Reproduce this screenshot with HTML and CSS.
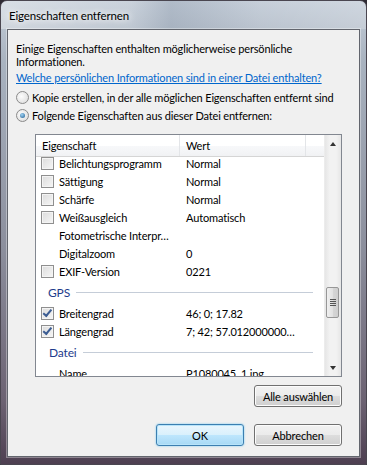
FILE: index.html
```html
<!DOCTYPE html>
<html lang="de">
<head>
    <meta charset="UTF-8">
    <meta name="viewport" content="width=device-width, initial-scale=1.0">
    <title>Eigenschaften entfernen</title>
    <link rel="stylesheet" href="styles.css">
</head>
<body>
    <div class="window">
        <div class="titlebar">Eigenschaften entfernen</div>
        <div class="client">
            <p class="intro">Einige Eigenschaften enthalten möglicherweise persönliche<br>Informationen.</p>
            <a href="#" class="link">Welche persönlichen Informationen sind in einer Datei enthalten?</a>
            <label class="radio first"><span class="dot"></span>Kopie erstellen, in der alle möglichen Eigenschaften entfernt sind</label>
            <label class="radio"><span class="dot on"></span>Folgende Eigenschaften aus dieser Datei entfernen:</label>

            <div class="listbox">
                <div class="listmain">
                    <div class="header">
                        <div class="hcol name">Eigenschaft</div>
                        <div class="hcol value">Wert</div>
                        <div class="hcol rest"></div>
                    </div>
                    <div class="rows">
                        <div class="inner">
                            <div class="row"><span class="box"></span><span class="name">Belichtungsprogramm</span><span class="value">Normal</span></div>
                            <div class="row"><span class="box"></span><span class="name">Sättigung</span><span class="value">Normal</span></div>
                            <div class="row"><span class="box"></span><span class="name">Schärfe</span><span class="value">Normal</span></div>
                            <div class="row"><span class="box"></span><span class="name">Weißausgleich</span><span class="value">Automatisch</span></div>
                            <div class="row"><span class="nobox"></span><span class="name">Fotometrische Interpr…</span><span class="value"></span></div>
                            <div class="row"><span class="nobox"></span><span class="name">Digitalzoom</span><span class="value">0</span></div>
                            <div class="row"><span class="box"></span><span class="name">EXIF-Version</span><span class="value">0221</span></div>
                            <div class="group gps"><span>GPS</span><i></i></div>
                            <div class="row"><span class="box checked"></span><span class="name">Breitengrad</span><span class="value">46; 0; 17.82</span></div>
                            <div class="row"><span class="box checked"></span><span class="name">Längengrad</span><span class="value">7; 42; 57.012000000…</span></div>
                            <div class="group"><span>Datei</span><i></i></div>
                            <div class="row"><span class="nobox"></span><span class="name">Name</span><span class="value">P1080045_1.jpg</span></div>
                        </div>
                    </div>
                </div>
                <div class="scrollbar">
                    <div class="arrow up"></div>
                    <div class="track">
                        <div class="thumb"><span></span><span></span><span></span><span></span></div>
                    </div>
                    <div class="arrow down"></div>
                </div>
            </div>

            <div class="buttons top">
                <button class="btn">Alle auswählen</button>
            </div>
            <div class="buttons bottom">
                <button class="btn default">OK</button>
                <button class="btn">Abbrechen</button>
            </div>
        </div>
    </div>
</body>
</html>
```

FILE: styles.css
```css
html, body {
    margin: 0;
    background: #2e2a33;
}
body {
    font-family: "Lato", "Open Sans", sans-serif;
    font-size: 11px;
    letter-spacing: -0.15px;
    color: #000;
}
.window {
    width: 367px;
    height: 465px;
    box-sizing: border-box;
    display: flex;
    flex-direction: column;
    border-radius: 7px 7px 0 0;
    border: 1px solid #4a4650;
    background: linear-gradient(to bottom, #c4cdd8 0, #a9b3c0 60px, #8b8e9c 250px, #6c6272 400px, #4d3e50 465px);
}
.titlebar {
    height: 28px;
    line-height: 30px;
    padding-left: 8px;
    font-size: 11.5px;
    background: linear-gradient(to right, rgba(255,255,255,0.35) 0, rgba(255,255,255,0.1) 130px, rgba(120,135,155,0.25) 170px, rgba(255,255,255,0.05) 260px, rgba(255,255,255,0.2) 100%);
    border-radius: 6px 6px 0 0;
    text-shadow: 0 0 6px #fff, 0 0 10px #fff;
    flex-shrink: 0;
}
.client {
    margin: 0 6px 7px 6px;
    flex: 1;
    background: #f0f0f0;
    border: 1px solid #62656d;
    box-shadow: 0 0 0 1px rgba(255,255,255,0.35);
    display: flex;
    flex-direction: column;
    align-items: flex-start;
    padding: 0 17px 0 8px;
}
.intro {
    margin: 12px 0 0;
    line-height: 13px;
    white-space: nowrap;
}
.link {
    margin-top: 3px;
    color: #0066cc;
    line-height: 14px;
    white-space: nowrap;
}
.radio {
    display: flex;
    align-items: center;
    gap: 3px;
    height: 18px;
    white-space: nowrap;
}
.radio.first {
    margin-top: 3px;
}
.dot {
    width: 11px;
    height: 11px;
    border: 1px solid #8a8a8a;
    border-radius: 50%;
    background: radial-gradient(circle at 40% 40%, #fdfdfd, #d8d8d8);
    display: inline-flex;
    align-items: center;
    justify-content: center;
}
.dot.on::after {
    content: "";
    width: 5px;
    height: 5px;
    border-radius: 50%;
    background: radial-gradient(circle at 40% 35%, #9fd3f4, #1d5b8f);
}
.listbox {
    align-self: stretch;
    margin: 10px 0 0 19px;
    height: 241px;
    border: 1px solid #828790;
    background: #fff;
    display: flex;
}
.listmain {
    flex: 1;
    display: flex;
    flex-direction: column;
    overflow: hidden;
}
.header {
    height: 21px;
    display: flex;
    border-bottom: 1px solid #d5d5d5;
    background: linear-gradient(to bottom, #fff 0, #fff 50%, #f7f8fa 51%, #f1f2f4 100%);
    flex-shrink: 0;
}
.hcol {
    border-right: 1px solid #e3e5e8;
    line-height: 22px;
    padding-left: 6px;
}
.hcol.name { width: 137px; }
.hcol.value { width: 119px; }
.hcol.rest { flex: 1; border-right: none; }
.rows {
    flex: 1;
    overflow: hidden;
}
.inner {
    margin-top: -3px;
}
.row {
    height: 18px;
    display: flex;
    align-items: center;
}
.box, .nobox {
    width: 11px;
    height: 11px;
    margin: 0 5px 0 5px;
    flex-shrink: 0;
    border: 1px solid #8f8f8f;
    background: linear-gradient(135deg, #dcdcdc, #f6f6f6);
    box-shadow: inset 0 0 0 1px #f4f4f4;
    display: flex;
    align-items: center;
    justify-content: center;
}
.nobox {
    border-color: transparent;
    background: none;
    box-shadow: none;
}
.box.checked::after {
    content: "";
    width: 3px;
    height: 7px;
    border: solid #3c5d93;
    border-width: 0 2px 2px 0;
    transform: rotate(40deg) translate(-1px, -1px);
}
.row .name {
    width: 127px;
    white-space: nowrap;
}
.row .value {
    white-space: nowrap;
}
.group {
    height: 24px;
    display: flex;
    align-items: center;
    padding-left: 13px;
    color: #1e3c8c;
    font-size: 12px;
}
.group.gps { padding-left: 12px; }
.group i {
    flex: 1;
    height: 1px;
    margin: 1px 11px 0 6px;
    background: #c5cdd8;
}
.scrollbar {
    width: 17px;
    display: flex;
    flex-direction: column;
    background: linear-gradient(to right, #e6e6e6, #f2f2f2 30%, #f2f2f2 70%, #e6e6e6);
    border-left: 1px solid #ececec;
    box-sizing: border-box;
}
.arrow {
    height: 17px;
    display: flex;
    align-items: center;
    justify-content: center;
}
.arrow::after {
    content: "";
    border-left: 3px solid transparent;
    border-right: 3px solid transparent;
}
.arrow.up::after {
    border-bottom: 4px solid #333;
}
.arrow.down::after {
    border-top: 4px solid #333;
}
.track {
    flex: 1;
    padding-top: 135px;
}
.thumb {
    width: 13px;
    height: 31px;
    margin-left: 1px;
    box-sizing: border-box;
    border: 1px solid #979797;
    border-radius: 2px;
    background: linear-gradient(to right, #f0f0f0, #e2e2e2 50%, #d6d6d6 51%, #cfcfcf);
    display: flex;
    flex-direction: column;
    align-items: center;
    justify-content: center;
    gap: 1px;
}
.thumb span {
    width: 6px;
    height: 1px;
    background: #555;
}
.buttons {
    align-self: stretch;
    display: flex;
    justify-content: flex-end;
    gap: 10px;
}
.buttons.top {
    margin-top: 8px;
}
.buttons.bottom {
    margin-top: 17px;
}
.btn {
    width: 88px;
    height: 22px;
    padding: 0;
    font-family: inherit;
    font-size: 11px;
    letter-spacing: -0.15px;
    color: #000;
    border: 1px solid #707070;
    border-radius: 3px;
    background: linear-gradient(to bottom, #f2f2f2 0, #ebebeb 50%, #dddddd 51%, #cfcfcf 100%);
    box-shadow: inset 0 0 0 1px #fcfcfc;
}
.btn.default {
    border-color: #3c7fb1;
    background: linear-gradient(to bottom, #eaf6fd 0, #d9f0fc 50%, #bee6fd 51%, #a7d9f5 100%);
    box-shadow: inset 0 0 0 1px #b8e4fa, 0 0 2px #6cc4f0;
}
```
